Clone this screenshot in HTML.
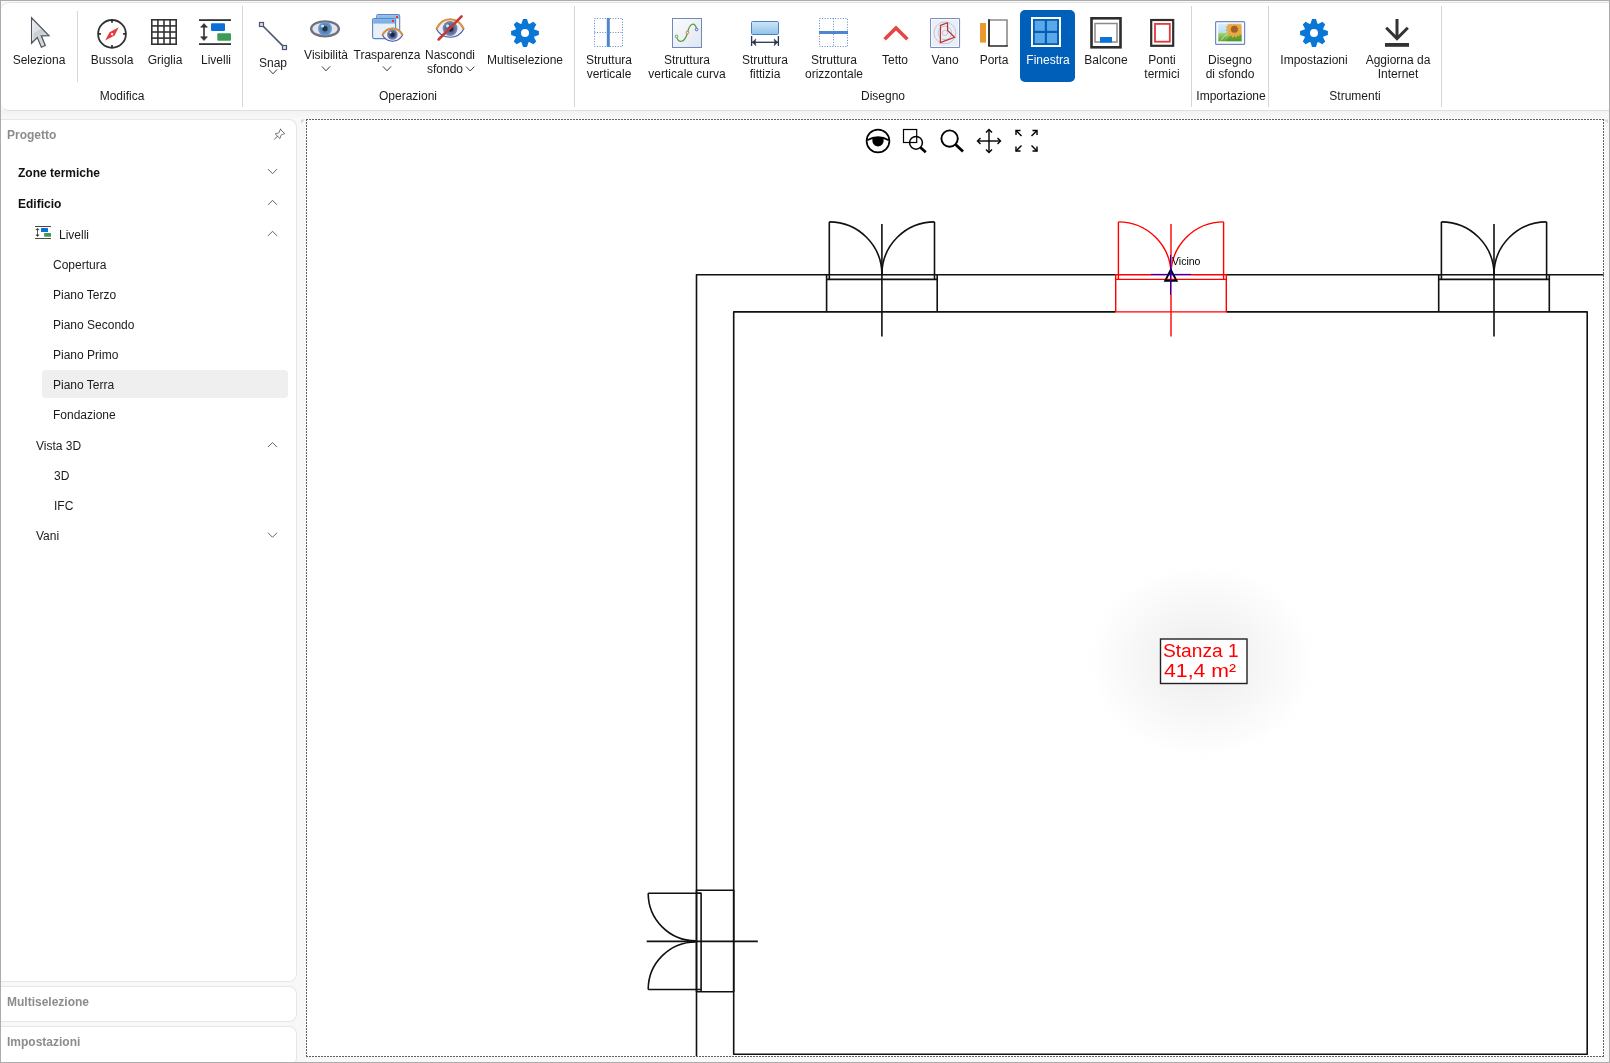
<!DOCTYPE html><html><head><meta charset="utf-8"><title>Disegno</title><style>
*{box-sizing:border-box;margin:0;padding:0}
html,body{width:1610px;height:1063px;overflow:hidden}
body{position:relative;background:#f8f8f8;font-family:"Liberation Sans",sans-serif;font-size:12px;color:#1b1b1b}
svg{position:absolute;left:0;top:0;overflow:visible}
.t{position:absolute;line-height:14px;white-space:nowrap;will-change:transform}
.c{position:absolute;width:160px;text-align:center;line-height:14px;white-space:nowrap;will-change:transform}
</style></head><body>
<div style="position:absolute;left:0;top:110px;width:1610px;height:10px;background:linear-gradient(#f2f2f2,#f9f9f9)"></div>
<div style="position:absolute;left:1px;top:2px;width:1609px;height:109px;background:#fff;border-top:1px solid #e3e3e3;border-bottom:1px solid #dedede;border-radius:8px 0 0 8px"></div>
<div style="position:absolute;left:0;top:119px;width:297px;height:863px;background:#fff;border:1px solid #e6e6e6;border-left:none;border-radius:0 8px 8px 0"></div>
<div style="position:absolute;left:0;top:986px;width:297px;height:36px;background:#fff;border:1px solid #e6e6e6;border-left:none;border-radius:0 8px 8px 0"></div>
<div style="position:absolute;left:0;top:1026px;width:297px;height:40px;background:#fff;border:1px solid #e6e6e6;border-left:none;border-radius:0 8px 8px 0"></div>
<div style="position:absolute;left:306px;top:119px;width:1298px;height:938px;background:#fff"></div>
<div style="position:absolute;left:77px;top:11px;width:1px;height:71px;background:#d6d6d6"></div>
<div style="position:absolute;left:1020px;top:10px;width:55px;height:72px;background:#005fb8;border-radius:5px"></div>
<div style="position:absolute;left:242px;top:6px;width:1px;height:101px;background:#d6d6d6"></div>
<div style="position:absolute;left:574px;top:6px;width:1px;height:101px;background:#d6d6d6"></div>
<div style="position:absolute;left:1191px;top:6px;width:1px;height:101px;background:#d6d6d6"></div>
<div style="position:absolute;left:1268px;top:6px;width:1px;height:101px;background:#d6d6d6"></div>
<div style="position:absolute;left:1441px;top:6px;width:1px;height:101px;background:#d6d6d6"></div>
<div class="c" style="left:-41.0px;top:52.7px;">Seleziona</div>
<div class="c" style="left:31.5px;top:52.7px;">Bussola</div>
<div class="c" style="left:85.0px;top:52.7px;">Griglia</div>
<div class="c" style="left:136.0px;top:52.7px;">Livelli</div>
<div class="c" style="left:193.0px;top:55.8px;">Snap</div>
<div class="c" style="left:246.0px;top:47.8px;">Visibilità</div>
<div class="c" style="left:306.6px;top:47.8px;">Trasparenza</div>
<div class="c" style="left:370.0px;top:47.8px;">Nascondi</div>
<div class="c" style="left:365.0px;top:61.5px;">sfondo</div>
<div class="c" style="left:445.4px;top:52.7px;">Multiselezione</div>
<div class="c" style="left:529.0px;top:52.7px;">Struttura</div>
<div class="c" style="left:529.0px;top:66.7px;">verticale</div>
<div class="c" style="left:606.7px;top:52.7px;">Struttura</div>
<div class="c" style="left:606.7px;top:66.7px;">verticale curva</div>
<div class="c" style="left:685.0px;top:52.7px;">Struttura</div>
<div class="c" style="left:685.0px;top:66.7px;">fittizia</div>
<div class="c" style="left:754.0px;top:52.7px;">Struttura</div>
<div class="c" style="left:754.0px;top:66.7px;">orizzontale</div>
<div class="c" style="left:815.0px;top:52.7px;">Tetto</div>
<div class="c" style="left:865.0px;top:52.7px;">Vano</div>
<div class="c" style="left:913.7px;top:52.7px;">Porta</div>
<div class="c" style="left:967.5px;top:52.7px;color:#fff;">Finestra</div>
<div class="c" style="left:1026.0px;top:52.7px;">Balcone</div>
<div class="c" style="left:1082.0px;top:52.7px;">Ponti</div>
<div class="c" style="left:1082.0px;top:66.7px;">termici</div>
<div class="c" style="left:1150.0px;top:52.7px;">Disegno</div>
<div class="c" style="left:1150.0px;top:66.7px;">di sfondo</div>
<div class="c" style="left:1234.0px;top:52.7px;">Impostazioni</div>
<div class="c" style="left:1317.5px;top:52.7px;">Aggiorna da</div>
<div class="c" style="left:1317.5px;top:66.7px;">Internet</div>
<div class="c" style="left:42.0px;top:88.9px;">Modifica</div>
<div class="c" style="left:328.0px;top:88.9px;">Operazioni</div>
<div class="c" style="left:803.0px;top:88.9px;">Disegno</div>
<div class="c" style="left:1150.5px;top:88.9px;">Importazione</div>
<div class="c" style="left:1274.5px;top:88.9px;">Strumenti</div>
<div class="t" style="left:6.5px;top:127.9px;color:#8c8c8c;font-weight:bold;">Progetto</div>
<div class="t" style="left:17.5px;top:166.0px;font-weight:bold;color:#111;">Zone termiche</div>
<div class="t" style="left:17.5px;top:197.0px;font-weight:bold;color:#111;">Edificio</div>
<div class="t" style="left:59.4px;top:228.0px;">Livelli</div>
<div style="position:absolute;left:42px;top:370px;width:246px;height:28px;background:#efefef;border-radius:4px"></div>
<div class="t" style="left:53.2px;top:258.4px;">Copertura</div>
<div class="t" style="left:53.2px;top:288.4px;">Piano Terzo</div>
<div class="t" style="left:53.2px;top:318.4px;">Piano Secondo</div>
<div class="t" style="left:53.2px;top:348.4px;">Piano Primo</div>
<div class="t" style="left:53.2px;top:378.4px;">Piano Terra</div>
<div class="t" style="left:53.2px;top:408.4px;">Fondazione</div>
<div class="t" style="left:35.5px;top:439.0px;">Vista 3D</div>
<div class="t" style="left:53.5px;top:468.7px;">3D</div>
<div class="t" style="left:53.5px;top:498.7px;">IFC</div>
<div class="t" style="left:35.5px;top:529.0px;">Vani</div>
<div class="t" style="left:6.5px;top:995.0px;color:#8c8c8c;font-weight:bold;">Multiselezione</div>
<div class="t" style="left:6.5px;top:1034.6px;color:#8c8c8c;font-weight:bold;">Impostazioni</div>
<svg width="1610" height="1063" viewBox="0 0 1610 1063"><defs>
<linearGradient id="gArrow" x1="0" y1="0" x2="0.35" y2="1"><stop offset="0" stop-color="#e9ebee"/><stop offset="0.5" stop-color="#dcdfe3"/><stop offset="0.52" stop-color="#c9ced4"/><stop offset="1" stop-color="#d6dade"/></linearGradient>
<radialGradient id="gIris" cx="0.4" cy="0.35" r="0.7"><stop offset="0" stop-color="#9cc4ea"/><stop offset="0.6" stop-color="#4f88c4"/><stop offset="1" stop-color="#3b6aa8"/></radialGradient>
<linearGradient id="gWin" x1="0" y1="0" x2="0" y2="1"><stop offset="0" stop-color="#ffffff"/><stop offset="1" stop-color="#dfe8f4"/></linearGradient>
<linearGradient id="gBar" x1="0" y1="0" x2="0" y2="1"><stop offset="0" stop-color="#8cc0ee"/><stop offset="1" stop-color="#4d8fd6"/></linearGradient>
<linearGradient id="gBox" x1="0" y1="0" x2="1" y2="1"><stop offset="0" stop-color="#fbfcfe"/><stop offset="1" stop-color="#dfe6f1"/></linearGradient>
<linearGradient id="gFit" x1="0" y1="0" x2="0" y2="1"><stop offset="0" stop-color="#cfe6f8"/><stop offset="1" stop-color="#8fc2ea"/></linearGradient>
<linearGradient id="gSky" x1="0" y1="0" x2="0" y2="1"><stop offset="0" stop-color="#bfe0f8"/><stop offset="0.5" stop-color="#e9f4fb"/><stop offset="0.55" stop-color="#8cc860"/><stop offset="1" stop-color="#4f9a30"/></linearGradient>
<radialGradient id="gGlow" cx="0.5" cy="0.5" r="0.5"><stop offset="0" stop-color="#efefef"/><stop offset="0.3" stop-color="#f2f2f2"/><stop offset="0.6" stop-color="#f8f8f8"/><stop offset="0.85" stop-color="#fdfdfd"/><stop offset="1" stop-color="#ffffff" stop-opacity="0"/></radialGradient>
</defs><path d="M31.6,17.9 L31.6,43.2 L37.3,37.6 L41.4,47.2 L45.3,45.5 L41.3,35.8 L48.9,35.6 Z" fill="url(#gArrow)" stroke="#4e545c" stroke-width="1.25" stroke-linejoin="miter"/><path d="M32.8,20.8 L32.8,40.3" stroke="#fafbfc" stroke-width="0.9"/><circle cx="112" cy="33.9" r="13.9" fill="none" stroke="#333" stroke-width="1.8"/><g stroke="#222" stroke-width="1.6"><line x1="112" y1="20" x2="112" y2="22.8"/><line x1="112" y1="45" x2="112" y2="47.8"/><line x1="98.2" y1="33.9" x2="101" y2="33.9"/><line x1="123" y1="33.9" x2="125.8" y2="33.9"/></g><path d="M105.3,40.6 L109.5,32.3 L118.7,27.2 L114.6,35.6 Z" fill="#e8393b"/><rect x="111.1" y="33" width="2" height="2" fill="#fff" transform="rotate(30 112 34)"/><g fill="none" stroke="#333" stroke-width="1.6"><rect x="151.8" y="19.8" width="24.4" height="24.4"/><line x1="157.9" y1="19.8" x2="157.9" y2="44.2"/><line x1="164" y1="19.8" x2="164" y2="44.2"/><line x1="170.1" y1="19.8" x2="170.1" y2="44.2"/><line x1="151.8" y1="25.9" x2="176.2" y2="25.9"/><line x1="151.8" y1="32" x2="176.2" y2="32"/><line x1="151.8" y1="38.1" x2="176.2" y2="38.1"/></g><g transform="translate(199,19.2) scale(1.0)"><rect x="0" y="0" width="32" height="1.8" fill="#333"/><rect x="0" y="24" width="32" height="1.8" fill="#333"/><rect x="12" y="4" width="14" height="7.8" rx="1" fill="#0b6fd8"/><rect x="18.3" y="14" width="13.7" height="7.6" rx="1" fill="#3c9b54"/><line x1="5" y1="5.5" x2="5" y2="20" stroke="#333" stroke-width="1.6"/><path d="M1.6,8 L5,4.3 L8.4,8 Z M1.6,17.6 L5,21.4 L8.4,17.6 Z" fill="#333" stroke="#333" stroke-width="0.6"/></g><line x1="261.5" y1="24.5" x2="284.5" y2="47.6" stroke="#4a5573" stroke-width="1.6"/><rect x="259.5" y="22.5" width="4" height="4" fill="#dde2ea" stroke="#4a5573" stroke-width="1.2"/><rect x="282.5" y="45.5" width="4" height="4" fill="#dde2ea" stroke="#4a5573" stroke-width="1.2"/><polyline points="268.9,69.39999999999999 273,73.8 277.1,69.39999999999999" fill="none" stroke="#3a3a3a" stroke-width="1.0"/><polyline points="321.9,66.39999999999999 326,70.8 330.1,66.39999999999999" fill="none" stroke="#3a3a3a" stroke-width="1.0"/><polyline points="382.9,66.39999999999999 387,70.8 391.1,66.39999999999999" fill="none" stroke="#3a3a3a" stroke-width="1.0"/><polyline points="466.09999999999997,66.6 470.2,71.0 474.3,66.6" fill="none" stroke="#3a3a3a" stroke-width="1.0"/><defs><filter id="fBlur" x="-20%" y="-20%" width="140%" height="140%"><feGaussianBlur stdDeviation="0.45"/></filter></defs><g filter="url(#fBlur)"><path d="M311.1,28.8 C312.2,18.9 337.8,18.9 338.9,28.8 C337.8,38.7 312.2,38.7 311.1,28.8 Z" fill="#e2e4ee" stroke="#6e727c" stroke-width="2.4"/><circle cx="325" cy="28.8" r="7" fill="#6a96c8"/><circle cx="325" cy="28.8" r="5.2" fill="#5486c0"/><circle cx="325" cy="28.8" r="2.7" fill="#26323e"/><circle cx="322.6" cy="26.2" r="1.4" fill="#cfe4f6"/></g><rect x="376.7" y="14.6" width="23" height="19" rx="1.5" fill="#eef3fa" stroke="#5a84c4" stroke-width="1.1"/><rect x="377.3" y="15.2" width="21.8" height="3.8" fill="#8cbcea"/><rect x="396" y="16" width="2" height="2" fill="#e03a30"/><rect x="372.6" y="18.6" width="23" height="20" rx="1.5" fill="#e9eff8" stroke="#5a84c4" stroke-width="1.1"/><rect x="373.2" y="19.2" width="21.8" height="4.4" fill="#7fb0e6"/><rect x="392" y="20" width="2" height="2" fill="#e03a30"/><path d="M382.4,35.1 C386.844,26.166666666666668 398.156,26.166666666666668 402.6,35.1 C398.156,43.36666666666667 386.844,43.36666666666667 382.4,35.1 Z" fill="#eef0f8" stroke="#3e54a8" stroke-width="1.1"/><path d="M382.4,35.1 C386.844,26.166666666666668 398.156,26.166666666666668 402.6,35.1" fill="none" stroke="#d8923e" stroke-width="2"/><circle cx="392.4" cy="34.5" r="5.3" fill="#6f82aa"/><circle cx="392.4" cy="34.5" r="3.8" fill="#4c5e88"/><circle cx="392.6" cy="34.8" r="2.2" fill="#1c2446"/><circle cx="390.5" cy="32.5" r="1" fill="#cfeaf0"/><path d="M436.4,29 C442.428,15.933333333333332 457.772,15.933333333333332 463.8,29 C457.772,40.06666666666666 442.428,40.06666666666666 436.4,29 Z" fill="#eceef6" stroke="#4656a8" stroke-width="1.1"/><path d="M436.4,29 C442.428,15.933333333333332 457.772,15.933333333333332 463.8,29" fill="none" stroke="#d8923e" stroke-width="2.1"/><circle cx="450.1" cy="28.5" r="7.4" fill="#7084ac"/><circle cx="450.1" cy="28.5" r="5.6" fill="#5a6e98"/><circle cx="450.6" cy="29" r="2.8" fill="#1c2446"/><circle cx="447.5" cy="25.8" r="1.6" fill="#c9e6f0"/><line x1="461.6" y1="16.4" x2="438.6" y2="39.5" stroke="#c43838" stroke-width="2.5" stroke-linecap="round"/><path d="M521.60,23.60 L523.00,19.10 L527.00,19.10 L528.40,23.60 A9.4,9.4 0 0 1 529.24,23.95 L533.41,21.76 L536.24,24.59 L534.05,28.76 A9.4,9.4 0 0 1 534.40,29.60 L538.90,31.00 L538.90,35.00 L534.40,36.40 A9.4,9.4 0 0 1 534.05,37.24 L536.24,41.41 L533.41,44.24 L529.24,42.05 A9.4,9.4 0 0 1 528.40,42.40 L527.00,46.90 L523.00,46.90 L521.60,42.40 A9.4,9.4 0 0 1 520.76,42.05 L516.59,44.24 L513.76,41.41 L515.95,37.24 A9.4,9.4 0 0 1 515.60,36.40 L511.10,35.00 L511.10,31.00 L515.60,29.60 A9.4,9.4 0 0 1 515.95,28.76 L513.76,24.59 L516.59,21.76 L520.76,23.95 A9.4,9.4 0 0 1 521.60,23.60 Z" fill="#0a76d6"/><circle cx="525" cy="33" r="4.0" fill="#fff"/><path d="M1310.60,23.60 L1312.00,19.10 L1316.00,19.10 L1317.40,23.60 A9.4,9.4 0 0 1 1318.24,23.95 L1322.41,21.76 L1325.24,24.59 L1323.05,28.76 A9.4,9.4 0 0 1 1323.40,29.60 L1327.90,31.00 L1327.90,35.00 L1323.40,36.40 A9.4,9.4 0 0 1 1323.05,37.24 L1325.24,41.41 L1322.41,44.24 L1318.24,42.05 A9.4,9.4 0 0 1 1317.40,42.40 L1316.00,46.90 L1312.00,46.90 L1310.60,42.40 A9.4,9.4 0 0 1 1309.76,42.05 L1305.59,44.24 L1302.76,41.41 L1304.95,37.24 A9.4,9.4 0 0 1 1304.60,36.40 L1300.10,35.00 L1300.10,31.00 L1304.60,29.60 A9.4,9.4 0 0 1 1304.95,28.76 L1302.76,24.59 L1305.59,21.76 L1309.76,23.95 A9.4,9.4 0 0 1 1310.60,23.60 Z" fill="#0a76d6"/><circle cx="1314" cy="33" r="4.0" fill="#fff"/><g fill="none" stroke="#5b87cc" stroke-width="1" stroke-dasharray="1,1.6"><rect x="594.5" y="18.5" width="28" height="28"/><line x1="594.5" y1="32.5" x2="622.5" y2="32.5"/></g><rect x="606.8" y="18" width="3" height="29" fill="#4f86d0"/><rect x="672.5" y="18.5" width="29" height="29" fill="url(#gBox)" stroke="#7088c0" stroke-width="1"/><path d="M676.5,36.5 C678,44 685,43 687.5,32.5 C690,22 695,22 696.8,29.5" fill="none" stroke="#5a9a3a" stroke-width="1.2"/><circle cx="676.5" cy="36.3" r="1.3" fill="#f4fff0" stroke="#5a9a3a" stroke-width="0.9"/><circle cx="687.5" cy="32.5" r="1.3" fill="#fff4e8" stroke="#d06a2a" stroke-width="0.9"/><circle cx="696.6" cy="29.5" r="1.3" fill="#e8f0ff" stroke="#3a60c0" stroke-width="0.9"/><rect x="751.5" y="21.5" width="27" height="13" rx="1" fill="url(#gFit)" stroke="#4a80c8" stroke-width="1"/><g stroke="#2c3452" stroke-width="1.3"><line x1="751.6" y1="36" x2="751.6" y2="46"/><line x1="778.4" y1="36" x2="778.4" y2="46"/><line x1="752" y1="42.3" x2="778" y2="42.3"/></g><path d="M752.2,42.3 L755.9,38.9 L755.2,42.3 L755.9,45.7 Z M777.8,42.3 L774.1,38.9 L774.8,42.3 L774.1,45.7 Z" fill="#2c3452" stroke="#2c3452" stroke-width="0.5" stroke-linejoin="round"/><g fill="none" stroke="#5b87cc" stroke-width="1" stroke-dasharray="1,1.6"><rect x="819.5" y="18.5" width="28" height="28"/><line x1="833.5" y1="18.5" x2="833.5" y2="46.5"/></g><rect x="819" y="31" width="29" height="3" fill="#4f86d0"/><polyline points="884.6,39.3 896,28 907.4,39.3" fill="none" stroke="#e84545" stroke-width="3.6"/><rect x="930.6" y="18.6" width="28.9" height="28.9" rx="0.8" fill="#eaeff7" stroke="#7a8cc0" stroke-width="1.2"/><rect x="931.6" y="19.6" width="26.9" height="26.9" fill="none" stroke="#fafcff" stroke-width="1"/><g fill="none" stroke="#b4bacb" stroke-width="0.8"><circle cx="944.9" cy="32.9" r="10.9"/><circle cx="944.9" cy="32.9" r="6.8"/><circle cx="944.9" cy="32.9" r="2.6"/></g><path d="M940.5,25.4 L947.5,22.8 L947.6,30.4 L954.6,37.2 L940.3,42.6 Z" fill="none" stroke="#c03030" stroke-width="1.2" stroke-linejoin="miter"/><rect x="980" y="23" width="6" height="19.6" fill="#e9992e"/><path d="M989,46 L989,20 L1007,20 L1007,46" fill="none" stroke="#8a8a8a" stroke-width="1.6"/><path d="M989,19.2 L989,46 L1007.8,46" fill="none" stroke="#282828" stroke-width="1.7"/><rect x="1032" y="18" width="28" height="28" fill="none" stroke="#fff" stroke-width="2"/><rect x="1034.8" y="20.8" width="10" height="10" fill="#5aa8ea"/><rect x="1047" y="20.8" width="10" height="10" fill="#5aa8ea"/><rect x="1034.8" y="33" width="10" height="10.2" fill="#5aa8ea"/><rect x="1047" y="33" width="10" height="10.2" fill="#5aa8ea"/><rect x="1091.5" y="18.3" width="29" height="29" fill="none" stroke="#2e2e2e" stroke-width="2.6"/><rect x="1095" y="23.5" width="22" height="18.5" fill="none" stroke="#8a8a8a" stroke-width="1.5"/><rect x="1100" y="37" width="12" height="5.6" fill="#0b74d9"/><rect x="1151.2" y="20" width="22" height="25.8" fill="none" stroke="#2e2e2e" stroke-width="2.2"/><rect x="1155" y="23.9" width="14.8" height="17.8" fill="none" stroke="#e53838" stroke-width="1.8"/><defs><clipPath id="cpPic"><rect x="1218" y="23.8" width="24" height="17.9"/></clipPath><linearGradient id="gSky2" x1="0" y1="0" x2="0" y2="1"><stop offset="0" stop-color="#d6eefc"/><stop offset="0.5" stop-color="#b8dcf6"/><stop offset="0.52" stop-color="#a6d468"/><stop offset="1" stop-color="#58a032"/></linearGradient></defs><rect x="1215.6" y="21.6" width="29" height="22.8" rx="1" fill="#fcfdff" stroke="#7388c0" stroke-width="1.2"/><rect x="1218" y="23.8" width="24" height="17.9" fill="url(#gSky2)"/><path d="M1226,41.7 Q1228,37 1233,34.5 L1242,35 L1242,41.7 Z" fill="#4f962c" opacity="0.7"/><g clip-path="url(#cpPic)"><g transform="translate(1234.4,29.3)"><g fill="#eeb24a" stroke="#d88a2a" stroke-width="0.4"><ellipse cx="0" cy="-5.6" rx="1.3" ry="2.8" transform="rotate(0)"/><ellipse cx="0" cy="-5.6" rx="1.3" ry="2.8" transform="rotate(24)"/><ellipse cx="0" cy="-5.6" rx="1.3" ry="2.8" transform="rotate(48)"/><ellipse cx="0" cy="-5.6" rx="1.3" ry="2.8" transform="rotate(72)"/><ellipse cx="0" cy="-5.6" rx="1.3" ry="2.8" transform="rotate(96)"/><ellipse cx="0" cy="-5.6" rx="1.3" ry="2.8" transform="rotate(120)"/><ellipse cx="0" cy="-5.6" rx="1.3" ry="2.8" transform="rotate(144)"/><ellipse cx="0" cy="-5.6" rx="1.3" ry="2.8" transform="rotate(168)"/><ellipse cx="0" cy="-5.6" rx="1.3" ry="2.8" transform="rotate(192)"/><ellipse cx="0" cy="-5.6" rx="1.3" ry="2.8" transform="rotate(216)"/><ellipse cx="0" cy="-5.6" rx="1.3" ry="2.8" transform="rotate(240)"/><ellipse cx="0" cy="-5.6" rx="1.3" ry="2.8" transform="rotate(264)"/><ellipse cx="0" cy="-5.6" rx="1.3" ry="2.8" transform="rotate(288)"/><ellipse cx="0" cy="-5.6" rx="1.3" ry="2.8" transform="rotate(312)"/><ellipse cx="0" cy="-5.6" rx="1.3" ry="2.8" transform="rotate(336)"/></g><circle cx="0" cy="0" r="3.5" fill="#a0622a"/></g></g><path d="M1221,40.5 Q1224,35.5 1228,34" fill="none" stroke="#d8f0c0" stroke-width="0.7"/><rect x="1218" y="23.8" width="24" height="17.9" fill="none" stroke="#eef4fb" stroke-width="0.6"/><rect x="1395.5" y="19" width="3" height="20" fill="#333"/><polyline points="1386.2,27.8 1397,38.6 1407.8,27.8" fill="none" stroke="#333" stroke-width="3"/><rect x="1385" y="43" width="24" height="3.8" fill="#333"/><g fill="none" stroke="#5e5e5e" stroke-width="0.95" stroke-linejoin="round" stroke-linecap="round"><path d="M280.4,129.3 L284.7,133.6 C283.5,134.5 281.6,134.3 280.8,135.5 C280.2,136.5 280.8,137.8 279.9,138.5 L275.2,133.9 C275.9,133 277.4,133.6 278.5,133 C279.7,132.3 279.5,130.3 280.4,129.3 Z"/><line x1="277.3" y1="136.3" x2="274.5" y2="139.3"/></g><polyline points="268.0,169.1 272.5,173.70000000000002 277.0,169.1" fill="none" stroke="#555" stroke-width="0.9"/><polyline points="268.0,204.9 272.5,200.29999999999998 277.0,204.9" fill="none" stroke="#555" stroke-width="0.9"/><polyline points="268.0,235.9 272.5,231.29999999999998 277.0,235.9" fill="none" stroke="#555" stroke-width="0.9"/><polyline points="268.0,447.1 272.5,442.5 277.0,447.1" fill="none" stroke="#555" stroke-width="0.9"/><polyline points="268.0,532.7 272.5,537.3 277.0,532.7" fill="none" stroke="#555" stroke-width="0.9"/><g transform="translate(35,226) scale(0.5)"><rect x="0" y="0" width="32" height="1.8" fill="#333"/><rect x="0" y="24" width="32" height="1.8" fill="#333"/><rect x="12" y="4" width="14" height="7.8" rx="1" fill="#0b6fd8"/><rect x="18.3" y="14" width="13.7" height="7.6" rx="1" fill="#3c9b54"/><line x1="5" y1="5.5" x2="5" y2="20" stroke="#333" stroke-width="1.6"/><path d="M1.6,8 L5,4.3 L8.4,8 Z M1.6,17.6 L5,21.4 L8.4,17.6 Z" fill="#333" stroke="#333" stroke-width="0.6"/></g><path d="M301,119.5 L305,119.5 L301,123.5 Z" fill="#d8d8d8"/><g stroke="#606060" stroke-width="1" stroke-dasharray="2,1" fill="none"><line x1="306" y1="119.5" x2="1604" y2="119.5"/><line x1="306" y1="1056.5" x2="1604" y2="1056.5"/><line x1="306.5" y1="119" x2="306.5" y2="1057"/><line x1="1603.5" y1="119" x2="1603.5" y2="1057"/></g><path d="M1604,119.5 L1608,119.5 L1608,123.5 Z" fill="#d8d8d8"/><ellipse cx="1202" cy="661" rx="120" ry="102" fill="url(#gGlow)"/><circle cx="878" cy="141" r="11.4" fill="none" stroke="#000" stroke-width="1.7"/><path d="M867.2,140.2 Q878,134 888.8,140.2" fill="none" stroke="#000" stroke-width="1.7"/><path d="M872.3,138.3 Q878,136.2 883.7,138.3 Q884.2,146 878,146.6 Q871.8,146 872.3,138.3 Z" fill="#000"/><g fill="none" stroke="#000" stroke-width="1.2"><rect x="903.5" y="129.5" width="13.2" height="13"/><circle cx="916" cy="142.8" r="6.4" stroke-width="1.5"/></g><line x1="920.5" y1="147.5" x2="925.8" y2="152.2" stroke="#000" stroke-width="2.8"/><circle cx="949.6" cy="138.6" r="8.2" fill="none" stroke="#000" stroke-width="1.9"/><line x1="955.5" y1="144.6" x2="963" y2="151.6" stroke="#000" stroke-width="2.8"/><g stroke="#000" stroke-width="1.4" fill="none"><line x1="989" y1="130" x2="989" y2="152"/><line x1="978" y1="141" x2="1000" y2="141"/><polyline points="986,132.5 989,129.5 992,132.5"/><polyline points="986,149.5 989,152.5 992,149.5"/><polyline points="980.5,138 977.5,141 980.5,144"/><polyline points="997.5,138 1000.5,141 997.5,144"/></g><g stroke="#000" stroke-width="1.4" fill="none"><line x1="1016" y1="130.5" x2="1021.5" y2="136"/><polyline points="1016,135 1016,130.5 1020.5,130.5"/><line x1="1037" y1="130.5" x2="1031.5" y2="136"/><polyline points="1032.5,130.5 1037,130.5 1037,135"/><line x1="1016" y1="151" x2="1021.5" y2="145.5"/><polyline points="1016,146.5 1016,151 1020.5,151"/><line x1="1037" y1="151" x2="1031.5" y2="145.5"/><polyline points="1032.5,151 1037,151 1037,146.5"/></g><g fill="none" stroke="#111" stroke-width="1.6" stroke-linejoin="round"><polyline points="696.5,1056 696.5,274.8 826.6,274.8"/><line x1="937.4" y1="274.8" x2="1115.4" y2="274.8"/><line x1="1226.6" y1="274.8" x2="1438.4" y2="274.8"/><line x1="1549.6" y1="274.8" x2="1603.5" y2="274.8"/><polyline points="826.6,311.9 733.7,311.9 733.7,1054.3 1587.2,1054.3 1587.2,311.9 1549.6,311.9"/><line x1="937.4" y1="311.9" x2="1115.4" y2="311.9"/><line x1="1226.6" y1="311.9" x2="1438.4" y2="311.9"/></g><g fill="none" stroke="#111" stroke-width="1.6" stroke-linejoin="round"><rect x="826.6" y="274.8" width="110.59999999999991" height="37.1"/><line x1="826.6" y1="279.4" x2="937.1999999999999" y2="279.4"/><line x1="829.3" y1="221.9" x2="829.3" y2="279.4"/><line x1="934.5" y1="221.9" x2="934.5" y2="279.4"/><path d="M829.3,221.9 A52.60000000000002,52.60000000000002 0 0 1 881.9,274.5"/><path d="M934.5,221.9 A52.60000000000002,52.60000000000002 0 0 0 881.9,274.5"/><line x1="881.9" y1="224" x2="881.9" y2="336.6"/></g><g fill="none" stroke="#111" stroke-width="1.6" stroke-linejoin="round"><rect x="1438.7" y="274.8" width="110.59999999999991" height="37.1"/><line x1="1438.7" y1="279.4" x2="1549.3" y2="279.4"/><line x1="1441.4" y1="221.9" x2="1441.4" y2="279.4"/><line x1="1546.6" y1="221.9" x2="1546.6" y2="279.4"/><path d="M1441.4,221.9 A52.59999999999991,52.59999999999991 0 0 1 1494,274.4999999999999"/><path d="M1546.6,221.9 A52.59999999999991,52.59999999999991 0 0 0 1494,274.4999999999999"/><line x1="1494" y1="224" x2="1494" y2="336.6"/></g><g fill="none" stroke="#ff0000" stroke-width="1.4" stroke-linejoin="round"><rect x="1115.7" y="274.8" width="110.59999999999991" height="37.1"/><line x1="1115.7" y1="279.4" x2="1226.3" y2="279.4"/><line x1="1118.4" y1="221.9" x2="1118.4" y2="279.4"/><line x1="1223.6" y1="221.9" x2="1223.6" y2="279.4"/><path d="M1118.4,221.9 A52.59999999999991,52.59999999999991 0 0 1 1171,274.4999999999999"/><path d="M1223.6,221.9 A52.59999999999991,52.59999999999991 0 0 0 1171,274.4999999999999"/><line x1="1171" y1="224" x2="1171" y2="336.6"/></g><g fill="none" stroke="#111" stroke-width="1.6" stroke-linejoin="round"><rect x="696.5" y="890.2" width="37.2" height="101.5"/><polyline points="696.5,893.3 701.1,893.3 701.1,991.7"/><line x1="648.2" y1="893.3" x2="701.1" y2="893.3"/><line x1="648.2" y1="989.5" x2="701.1" y2="989.5"/><path d="M648.2,893.3 A47.5,47.5 0 0 0 695.7,940.8"/><path d="M648.2,989.5 A47.5,47.5 0 0 1 695.7,942.0"/><line x1="646.7" y1="941.4" x2="757.8" y2="941.4"/></g><path d="M1170.8,269.8 L1165.2,280.8 L1176.6,280.8 Z" fill="none" stroke="#000" stroke-width="1.9" stroke-linejoin="miter"/><g stroke="#0000f0" stroke-width="1"><line x1="1151" y1="274.4" x2="1191" y2="274.4"/><line x1="1170.5" y1="255" x2="1170.5" y2="294.8"/></g><rect x="1160.5" y="639" width="86.5" height="44.5" fill="#fff" stroke="#222" stroke-width="1.4"/></svg>
<div class="t" style="left:1171.5px;top:255px;font-size:10.5px;line-height:12px;color:#000;font-family:'Liberation Sans',sans-serif">Vicino</div>
<div class="t" style="left:1162.6px;top:640.5px;font-size:17.5px;line-height:20.5px;color:#f00;transform:scaleX(1.095);transform-origin:0 0">Stanza 1</div><div class="t" style="left:1164.3px;top:661px;font-size:17.5px;line-height:20.5px;color:#f00;transform:scaleX(1.215);transform-origin:0 0">41,4 m²</div>
<div style="position:absolute;left:0;top:0;width:1610px;height:1063px;border:1px solid #acacac"></div>
</body></html>
